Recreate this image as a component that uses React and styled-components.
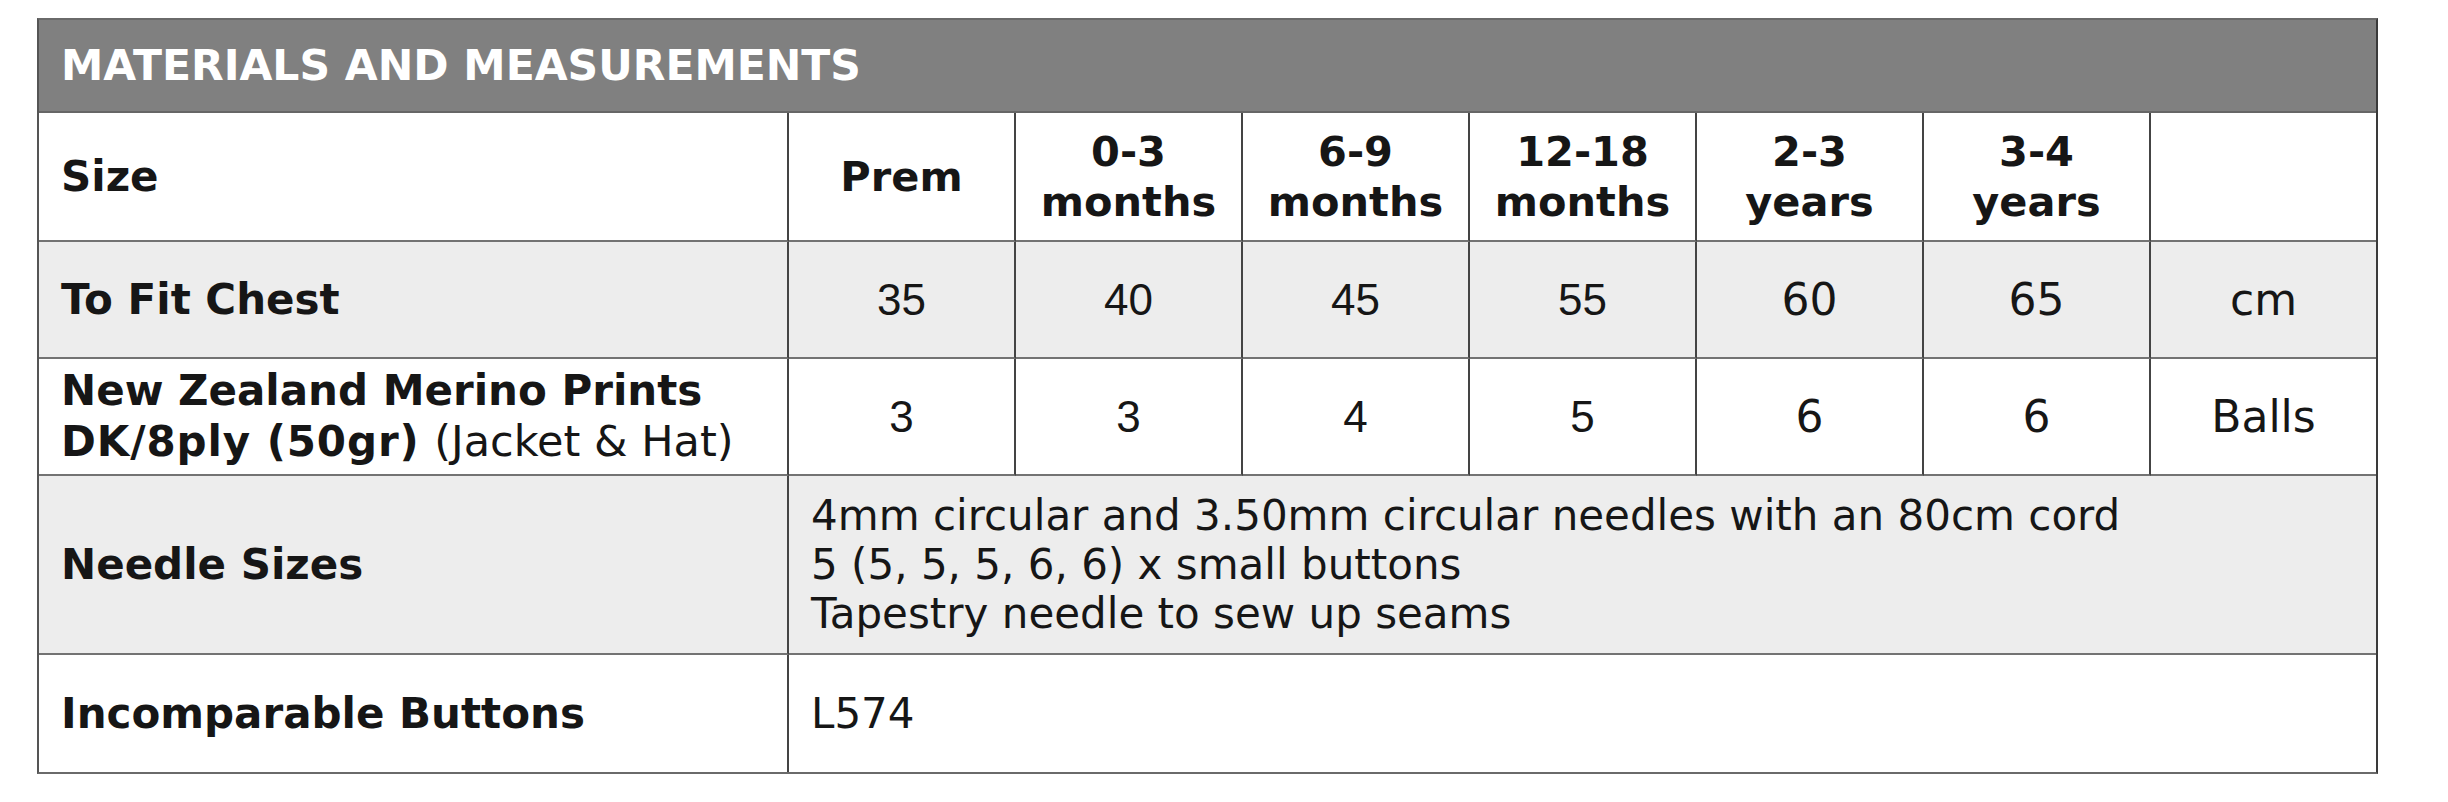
import React from "react";
import styled, { createGlobalStyle } from "styled-components";

const GlobalStyle = createGlobalStyle`
  body {
    margin: 0;
    background: #ffffff;
    font-family: "DejaVu Sans", Verdana, sans-serif;
    color: #161616;
  }
`;

const Sheet = styled.div`
  box-sizing: border-box;
  width: 2341px;
  margin: 18px 0 0 37px;
  border: 2px solid #6a6a6a;
  border-left-color: #555;
  border-right-color: #3a3a3a;
  display: grid;
  grid-template-columns: 750px repeat(6, 227px) 1fr;
  grid-template-rows: 93px 129px 117px 117px 179px 117px;
`;

const Title = styled.div`
  grid-column: 1 / -1;
  box-sizing: border-box;
  background: #808080;
  border-bottom: 2px solid #666;
  color: #ffffff;
  font-weight: bold;
  font-size: 42.5px;
  display: flex;
  align-items: center;
  padding-left: 22px;
`;

const Cell = styled.div`
  box-sizing: border-box;
  background: ${(p) => (p.$shade ? "#ededed" : "#ffffff")};
  border-right: ${(p) => (p.$end ? "none" : "2px solid #444")};
  border-bottom: ${(p) => (p.$bottom ? "none" : "2px solid #737373")};
  grid-column: ${(p) => p.$span || "auto"};
  display: flex;
  align-items: center;
  min-width: 0;
`;

const Label = styled(Cell)`
  padding-left: 22px;
  font-weight: bold;
  font-size: 42px;
  line-height: 50px;
  white-space: nowrap;
`;

const Spaced = styled.span`
  letter-spacing: 0.9px;
`;

const Regular = styled.span`
  font-weight: normal;
  font-size: 43px;
`;

const HeadCell = styled(Cell)`
  justify-content: center;
  text-align: center;
  font-weight: bold;
  font-size: 41.5px;
  line-height: 50px;
`;

const Value = styled(Cell)`
  justify-content: center;
  font-family: ${(p) =>
    p.$arial ? '"Liberation Sans", Arial, sans-serif' : '"DejaVu Sans", Verdana, sans-serif'};
  font-size: 44px;
`;

const Notes = styled(Cell)`
  padding-left: 22px;
  font-size: 42px;
  line-height: 49px;
  white-space: nowrap;
`;

const sizes = [
  ["Prem"],
  ["0-3", "months"],
  ["6-9", "months"],
  ["12-18", "months"],
  ["2-3", "years"],
  ["3-4", "years"],
  [],
];

const chest = ["35", "40", "45", "55", "60", "65", "cm"];
const balls = ["3", "3", "4", "5", "6", "6", "Balls"];

// the first four value columns are set in an Arial-like face in the source
const isArial = (i) => i < 4;

export default function App() {
  return (
    <>
      <GlobalStyle />
      <Sheet>
        <Title>MATERIALS AND MEASUREMENTS</Title>

        <Label>Size</Label>
        {sizes.map((lines, i) => (
          <HeadCell key={i} $end={i === sizes.length - 1}>
            <div>
              {lines.map((l) => (
                <div key={l}>{l}</div>
              ))}
            </div>
          </HeadCell>
        ))}

        <Label $shade>To Fit Chest</Label>
        {chest.map((v, i) => (
          <Value key={i} $shade $arial={isArial(i)} $end={i === chest.length - 1}>
            {v}
          </Value>
        ))}

        <Label>
          <div>
            New Zealand Merino Prints
            <br />
            <Spaced>DK/8ply (50gr)</Spaced> <Regular>(Jacket &amp; Hat)</Regular>
          </div>
        </Label>
        {balls.map((v, i) => (
          <Value key={i} $arial={isArial(i)} $end={i === balls.length - 1}>
            {v}
          </Value>
        ))}

        <Label $shade>Needle Sizes</Label>
        <Notes $shade $end $span="2 / -1">
          <div>
            4mm circular and 3.50mm circular needles with an 80cm cord
            <br />
            5 (5, 5, 5, 6, 6) x small buttons
            <br />
            Tapestry needle to sew up seams
          </div>
        </Notes>

        <Label $bottom>Incomparable Buttons</Label>
        <Notes $bottom $end $span="2 / -1">
          L574
        </Notes>
      </Sheet>
    </>
  );
}
